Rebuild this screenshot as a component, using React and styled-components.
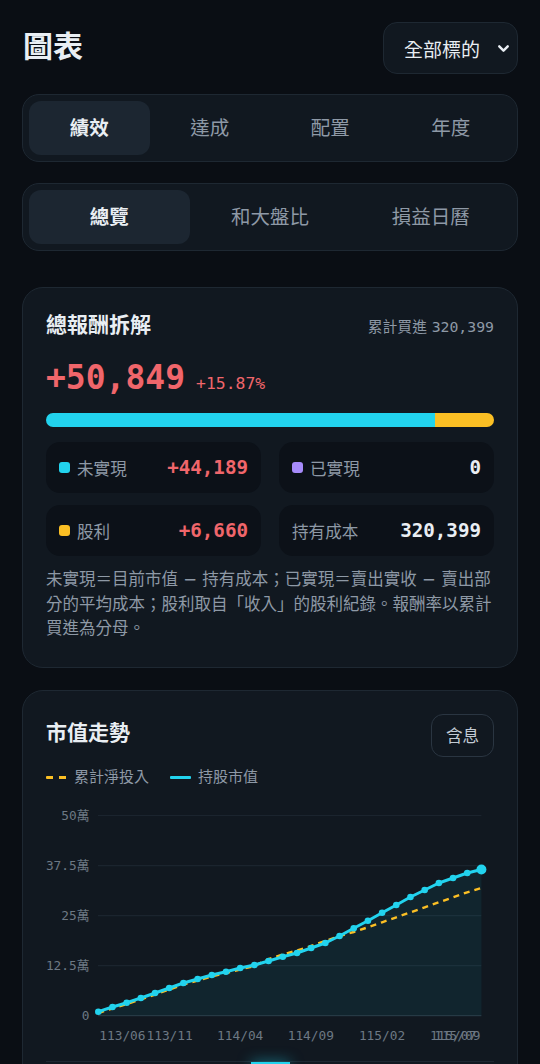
import React from 'react'
import styled, { createGlobalStyle } from 'styled-components'
import { ChevronDown } from 'lucide-react'

const sans = `"DejaVu Sans", "Noto Sans CJK TC", sans-serif`
const mono = `"DejaVu Sans Mono", "Noto Sans CJK TC", monospace`

const colors = {
  bg: '#0a0e14',
  panel: '#111820',
  border: '#1e2832',
  active: '#1c2631',
  well: '#0c1118',
  text: '#e9eef3',
  muted: '#8e99a6',
  dim: '#6d7884',
  red: '#f0666b',
  cyan: '#22d3ee',
  amber: '#fbbf24',
  purple: '#a78bfa'
}

const GlobalStyle = createGlobalStyle`
  html, body {
    margin: 0;
    padding: 0;
    background: ${colors.bg};
    font-family: ${sans};
    color: ${colors.text};
  }
  * { box-sizing: border-box; }
`

const Page = styled.div`
  padding: 22px 22px 40px;
`

const Header = styled.div`
  display: flex;
  align-items: center;
  justify-content: space-between;
`

const PageTitle = styled.h1`
  margin: 0 0 3px 1px;
  font-size: 30px;
  font-weight: 700;
  line-height: 1.2;
`

const Select = styled.div`
  display: flex;
  align-items: center;
  justify-content: space-between;
  width: 135px;
  height: 52px;
  padding: 0 5px 0 20px;
  border: 1px solid ${colors.border};
  border-radius: 14px;
  background: ${colors.panel};
  font-size: 19px;
  color: ${colors.text};
`

const TabGroup = styled.div`
  display: grid;
  grid-template-columns: repeat(${({ count }) => count}, 1fr);
  margin-top: ${({ gap }) => gap}px;
  padding: 6px;
  border: 1px solid ${colors.border};
  border-radius: 17px;
  background: ${colors.panel};
`

const Tab = styled.div`
  display: flex;
  align-items: center;
  justify-content: center;
  height: 54px;
  padding-bottom: 4px;
  border-radius: 12px;
  font-size: 19.5px;
  font-weight: ${({ active }) => (active ? 700 : 400)};
  color: ${({ active }) => (active ? colors.text : colors.muted)};
  background: ${({ active }) => (active ? colors.active : 'transparent')};
`

const Card = styled.section`
  margin-top: ${({ gap }) => gap}px;
  padding: 23px 23px 25px;
  border: 1px solid ${colors.border};
  border-radius: 21px;
  background: ${colors.panel};
`

const CardHead = styled.div`
  display: flex;
  align-items: center;
  justify-content: space-between;
`

const CardTitle = styled.h2`
  margin: 0 0 ${({ raised }) => (raised ? 5 : 0)}px;
  font-size: 21px;
  font-weight: 700;
  line-height: 28px;
`

const HeadNote = styled.div`
  font-size: 14.8px;
  color: ${colors.muted};

  span {
    font-family: ${mono};
  }
`

const TotalRow = styled.div`
  display: flex;
  align-items: baseline;
  gap: 11px;
  margin-top: 19px;
  color: ${colors.red};
  font-family: ${mono};
`

const TotalValue = styled.div`
  font-size: 33px;
  font-weight: 700;
  line-height: 40px;
`

const TotalPct = styled.div`
  font-size: 16.4px;
`

const Bar = styled.div`
  display: flex;
  height: 14px;
  margin-top: 15px;
  border-radius: 7px;
  overflow: hidden;
`

const BarPart = styled.div`
  background: ${({ color }) => color};
`

const StatGrid = styled.div`
  display: grid;
  grid-template-columns: 1fr 1fr;
  column-gap: 18px;
  row-gap: 12px;
  margin-top: 15px;
`

const Stat = styled.div`
  display: flex;
  align-items: center;
  height: 51px;
  padding: 0 13px;
  border-radius: 14px;
  background: ${colors.well};
`

const Dot = styled.i`
  width: 11px;
  height: 11px;
  margin-right: 7px;
  border-radius: 3px;
  background: ${({ color }) => color};
`

const StatLabel = styled.span`
  flex: 1;
  font-size: 16.6px;
  color: ${colors.muted};
`

const StatValue = styled.span`
  font-family: ${mono};
  font-size: 19.2px;
  font-weight: 700;
  color: ${({ tone }) => (tone === 'red' ? colors.red : colors.text)};
`

const Note = styled.p`
  margin: 12px 0 0;
  font-size: 16.5px;
  line-height: 24.5px;
  color: ${colors.muted};
`

const OutlineButton = styled.div`
  display: flex;
  align-items: center;
  justify-content: center;
  width: 63px;
  height: 43px;
  border: 1px solid #2a3541;
  border-radius: 12px;
  font-size: 16.6px;
  color: #c3cbd4;
`

const Legend = styled.div`
  display: flex;
  align-items: center;
  gap: 21px;
  margin-top: 10px;
  font-size: 15px;
  line-height: 21px;
  color: ${colors.muted};
`

const LegendItem = styled.div`
  display: flex;
  align-items: center;
  gap: 7px;
`

const LegendLine = styled.i`
  width: 21px;
  height: 3px;
  border-radius: 1px;
  background: ${({ dashed, color }) =>
    dashed
      ? `repeating-linear-gradient(90deg, ${color} 0 7px, transparent 7px 13px)`
      : color};
`

const ChartSvg = styled.svg`
  display: block;
  width: 100%;
  height: 248px;
  margin-top: 12px;
  overflow: visible;
`

const AxisText = styled.text`
  font-family: ${mono};
  font-size: 12.8px;
  fill: ${colors.dim};
`

const Scrubber = styled.div`
  display: flex;
  flex-direction: column;
  align-items: center;
  margin-top: 13px;
  border-top: 1px solid ${colors.border};
`

const Thumb = styled.div`
  width: 39px;
  height: 8px;
  border-radius: 0 0 6px 6px;
  background: ${colors.cyan};
  box-shadow: 0 0 14px rgba(34, 211, 238, 0.55);
`

// chart data, in svg px (x from card content left, y from chart top)
const marketY = [1011.7, 1007, 1002.7, 998, 993, 988, 983, 979, 975, 971.7, 968, 965, 961, 956.7,
  953, 948, 943, 936, 928.3, 920.7, 912.7, 905, 897, 890, 883, 878, 873, 869.5]
const investY = [1013, 1008.5, 1004, 999.5, 994.5, 989.5, 984.5, 980.5, 976.5, 973, 969.5, 966,
  959, 954.5, 950.5, 946, 941, 936, 932, 927.3, 922.3, 917.3, 912.3, 907.3, 902.3, 897.3, 892.3, 888]

const xAt = (i) => 52.3 + i * 14.19
const toPts = (ys) => ys.map((y, i) => [xAt(i), y - 800])
const market = toPts(marketY)
const invest = toPts(investY)
const line = (pts) => pts.map(([x, y], i) => `${i ? 'L' : 'M'}${x.toFixed(1)},${y.toFixed(1)}`).join(' ')

const yTicks = [
  { label: '50萬', y: 15.5 },
  { label: '37.5萬', y: 65.7 },
  { label: '25萬', y: 115.7 },
  { label: '12.5萬', y: 165.7 },
  { label: '0', y: 215.7 }
]

const xTicks = [
  { label: '113/06', x: 76.4 },
  { label: '113/11', x: 123.6 },
  { label: '114/04', x: 194.2 },
  { label: '114/09', x: 264.8 },
  { label: '115/02', x: 336 },
  { label: '115/07', x: 407 },
  { label: '115/09', x: 411.3 }
]

const TrendChart = () => {
  const last = market[market.length - 1]
  const area = `${line(market)} L${last[0]},215.7 L${market[0][0]},215.7 Z`

  return (
    <ChartSvg viewBox="0 0 448 248">
      {yTicks.map((t) => (
        <g key={t.label}>
          <line x1="52" x2="435.4" y1={t.y} y2={t.y} stroke={t.label === '0' ? '#27323d' : '#1b242e'} strokeWidth="1.2" />
          <AxisText x="43.5" y={t.y + 4.5} textAnchor="end">{t.label}</AxisText>
        </g>
      ))}
      <path d={area} fill={colors.cyan} fillOpacity="0.07" />
      <path d={line(invest)} fill="none" stroke={colors.amber} strokeWidth="2.4" strokeDasharray="6 5" />
      <path d={line(market)} fill="none" stroke={colors.cyan} strokeWidth="3" strokeLinejoin="round" />
      {market.slice(0, -1).map(([x, y], i) => (
        <circle key={i} cx={x} cy={y} r="3.3" fill={colors.cyan} />
      ))}
      <circle cx={last[0]} cy={last[1]} r="5" fill={colors.cyan} />
      {xTicks.map((t) => (
        <AxisText key={t.label} x={t.x} y="239.5" textAnchor="middle">{t.label}</AxisText>
      ))}
    </ChartSvg>
  )
}

const stats = [
  { label: '未實現', value: '+44,189', dot: colors.cyan, tone: 'red' },
  { label: '已實現', value: '0', dot: colors.purple },
  { label: '股利', value: '+6,660', dot: colors.amber, tone: 'red' },
  { label: '持有成本', value: '320,399' }
]

const App = () => (
  <Page>
    <GlobalStyle />
    <Header>
      <PageTitle>圖表</PageTitle>
      <Select>
        全部標的
        <ChevronDown size={17} strokeWidth={3.4} color={colors.text} />
      </Select>
    </Header>

    <TabGroup count={4} gap={20}>
      {['績效', '達成', '配置', '年度'].map((t, i) => <Tab key={t} active={i === 0}>{t}</Tab>)}
    </TabGroup>

    <TabGroup count={3} gap={21}>
      {['總覽', '和大盤比', '損益日曆'].map((t, i) => <Tab key={t} active={i === 0}>{t}</Tab>)}
    </TabGroup>

    <Card gap={36}>
      <CardHead>
        <CardTitle>總報酬拆解</CardTitle>
        <HeadNote>累計買進 <span>320,399</span></HeadNote>
      </CardHead>
      <TotalRow>
        <TotalValue>+50,849</TotalValue>
        <TotalPct>+15.87%</TotalPct>
      </TotalRow>
      <Bar>
        <BarPart color={colors.cyan} style={{ flex: 44189 }} />
        <BarPart color={colors.amber} style={{ flex: 6660 }} />
      </Bar>
      <StatGrid>
        {stats.map((s) => (
          <Stat key={s.label}>
            {s.dot && <Dot color={s.dot} />}
            <StatLabel>{s.label}</StatLabel>
            <StatValue tone={s.tone}>{s.value}</StatValue>
          </Stat>
        ))}
      </StatGrid>
      <Note>
        未實現＝目前市值 − 持有成本；已實現＝賣出實收 − 賣出部分的平均成本；股利取自「收入」的股利紀錄。報酬率以累計買進為分母。
      </Note>
    </Card>

    <Card gap={22}>
      <CardHead>
        <CardTitle raised>市值走勢</CardTitle>
        <OutlineButton>含息</OutlineButton>
      </CardHead>
      <Legend>
        <LegendItem><LegendLine dashed color={colors.amber} />累計淨投入</LegendItem>
        <LegendItem><LegendLine color={colors.cyan} />持股市值</LegendItem>
      </Legend>
      <TrendChart />
      <Scrubber>
        <Thumb />
      </Scrubber>
    </Card>
  </Page>
)

export default App
